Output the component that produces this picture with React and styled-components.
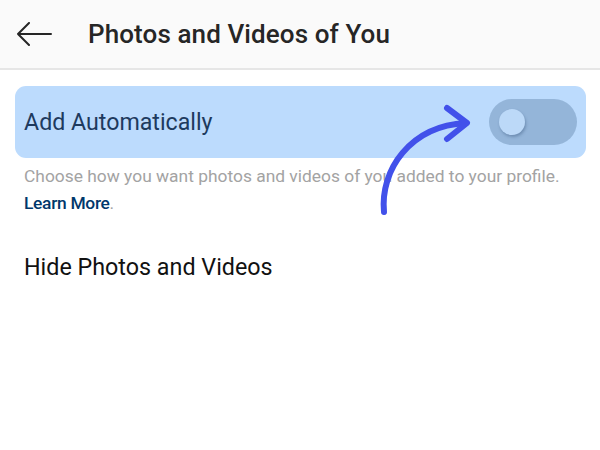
import React from 'react';
import styled, { createGlobalStyle } from 'styled-components';

const GlobalStyle = createGlobalStyle`
  html, body {
    margin: 0;
    padding: 0;
    background: #ffffff;
    font-family: Roboto, 'Noto Sans', sans-serif;
  }
`;

const Screen = styled.div`
  width: 600px;
  height: 450px;
  position: relative;
  overflow: hidden;
  background: #ffffff;
`;

const Header = styled.header`
  height: 68px;
  display: flex;
  align-items: center;
  background: #fafafa;
  border-bottom: 2px solid #e6e6e6;
  padding-left: 16px;
  gap: 36px;
`;

const BackButton = styled.button`
  border: none;
  background: none;
  padding: 0;
  display: flex;
  align-items: center;
  cursor: pointer;
`;

const Title = styled.h1`
  margin: 0;
  font-size: 26px;
  font-weight: 500;
  color: #262626;
  letter-spacing: 0.1px;
`;

const Content = styled.main`
  padding: 16px 14px 0 15px;
  display: flex;
  flex-direction: column;
`;

const SettingRow = styled.div`
  height: 72px;
  display: flex;
  align-items: center;
  justify-content: space-between;
  padding: 0 9px;
  border-radius: 11px;
  background: ${(p) => (p.$highlighted ? '#bcdbfd' : 'transparent')};
`;

const RowLabel = styled.span`
  font-size: 23.2px;
  color: ${(p) => (p.$highlighted ? '#1e3a5e' : '#111111')};
`;

const Track = styled.div`
  width: 88px;
  height: 46px;
  border-radius: 23px;
  background: #94b5d9;
  display: flex;
  align-items: center;
  padding-left: 10px;
  box-sizing: border-box;
`;

const Knob = styled.div`
  width: 26px;
  height: 26px;
  border-radius: 50%;
  background: #bcd9f8;
  box-shadow: 1px 2px 3px rgba(40, 70, 110, 0.35);
`;

const Caption = styled.p`
  margin: 5px 0 0 9px;
  font-size: 17.4px;
  line-height: 27px;
  color: #a3a3a3;
`;

const LearnMore = styled.a`
  color: #00376b;
  font-weight: 500;
  text-decoration: none;
  letter-spacing: -0.3px;
`;

const Dot = styled.span`
  color: #a3a3a3;
`;

const PlainRow = styled.div`
  margin-top: 36px;
  padding-left: 9px;
  font-size: 23.3px;
  color: #111111;
`;

const Pointer = styled.svg`
  position: absolute;
  left: 370px;
  top: 100px;
  pointer-events: none;
`;

export default function App() {
  return (
    <Screen>
      <GlobalStyle />
      <Header>
        <BackButton aria-label="Back">
          <svg width="36" height="24" viewBox="0 0 36 24">
            <path
              d="M35 12H2M13 1L2 12l11 11"
              fill="none"
              stroke="#262626"
              strokeWidth="2"
              strokeLinecap="round"
              strokeLinejoin="round"
            />
          </svg>
        </BackButton>
        <Title>Photos and Videos of You</Title>
      </Header>
      <Content>
        <SettingRow $highlighted>
          <RowLabel $highlighted>Add Automatically</RowLabel>
          <Track>
            <Knob />
          </Track>
        </SettingRow>
        <Caption>
          Choose how you want photos and videos of you added to your profile.
          <br />
          <LearnMore href="#">Learn More</LearnMore>
          <Dot>.</Dot>
        </Caption>
        <PlainRow>Hide Photos and Videos</PlainRow>
      </Content>
      <Pointer width="110" height="120" viewBox="0 0 110 120">
        <path
          d="M14 112 C10 70 40 26 96 23"
          fill="none"
          stroke="#4251ea"
          strokeWidth="6"
          strokeLinecap="round"
        />
        <path
          d="M77 8 L97 23 L77 39"
          fill="none"
          stroke="#4251ea"
          strokeWidth="6"
          strokeLinecap="round"
          strokeLinejoin="round"
        />
      </Pointer>
    </Screen>
  );
}
